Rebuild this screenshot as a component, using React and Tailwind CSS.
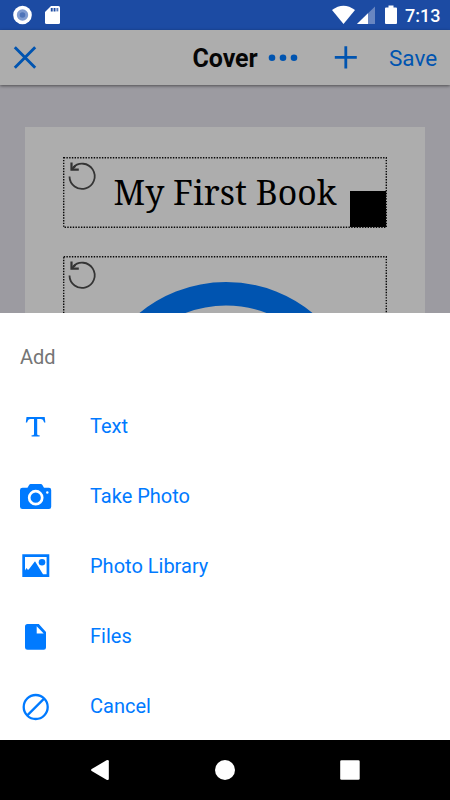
function StatusBar() {
  return (
    <header className="flex h-[30px] shrink-0 items-center bg-[#1c4ba3] text-white">
      <svg className="h-[30px] w-[70px]" viewBox="0 0 70 30">
        <circle cx="22.5" cy="15" r="9.3" fill="#fff" />
        <circle cx="22.5" cy="15" r="5.7" fill="#7f9bd0" />
        <circle cx="22.5" cy="15" r="2.8" fill="#4f74b9" />
        <path d="M51 6h7.5q1.5 0 1.5 1.5v15q0 1.5-1.5 1.5h-12q-1.5 0-1.5-1.5V12z" fill="#fff" />
        <path d="M50.8 8h1.9v3.4h-1.9zM53.6 8h1.9v3.4h-1.9z" fill="#1c4ba3" />
        <path d="M56.4 8h1.9v3.4h-1.9z" fill="#5679bb" />
      </svg>
      <svg className="ml-auto h-[30px] w-[75px]" viewBox="325 0 75 30">
        <path d="M332 10Q343.5 1.5 355 10L343.5 24z" fill="#fff" />
        <path d="M375 6.500V24H357z" fill="#6886c1" />
        <path d="M368 13.300V24H357z" fill="#fff" />
        <path d="M386 7.500h2.500V5.500h5v2H396q1 0 1 1V23q0 1-1 1h-10q-1 0-1-1V8.500q0-1 1-1z" fill="#fff" />
      </svg>
      <span className="w-[50px] pt-[2px] pl-[5px] text-[18px] leading-[30px] font-medium">7:13</span>
    </header>
  );
}

function Toolbar() {
  return (
    <nav className="relative z-10 flex h-[55px] shrink-0 items-center bg-[#adadad] text-[#0054b0] shadow-[0_1px_3px_rgba(0,0,0,0.5)]">
      <svg className="h-[55px] w-[192px]" viewBox="0 30 192 55" fill="none" stroke="currentColor" strokeWidth="2.900">
        <path d="M14.800 47.300l20.400 20.400M35.200 47.300l-20.400 20.400" />
      </svg>
      <h1 className="w-[76px] pt-[3px] pl-[0.600px] text-[25px] leading-[52px] font-bold tracking-[-0.1px] text-[#060606]">Cover</h1>
      <svg className="h-[55px] w-[121px]" viewBox="268 30 121 55" fill="currentColor">
        <circle cx="272" cy="57.700" r="3.300" />
        <circle cx="283" cy="57.700" r="3.300" />
        <circle cx="294" cy="57.700" r="3.300" />
        <path d="M334.800 56h9.600v-9.700h2.800V56h9.600v2.800h-9.600v9.700h-2.800v-9.700h-9.600z" />
      </svg>
      <span className="pt-[3px] text-[22.500px]">Save</span>
    </nav>
  );
}

function DottedFrame({ height, children }) {
  return (
    <div className="relative w-[324px] shrink-0" style={{ height }}>
      {children}
      <svg className="absolute inset-0 h-full w-full" fill="none">
        <rect x="0.700" y="0.700" width="322.600" height={height - 1.4} stroke="#080808" strokeWidth="1.400" strokeDasharray="1.4 1.330" />
      </svg>
      <svg className="absolute top-[4px] left-[4px] h-[32px] w-[32px]" viewBox="67 161 32 32" fill="none" stroke="#343434" strokeWidth="1.800">
        <path d="M69.500 176.500a12.600 12.600 0 1 0 3.300-8.700" />
        <path d="M71.500 162.500v7.200h7.300" strokeWidth="2.200" />
        <path d="M71.500 169.700l4-3.700" />
      </svg>
    </div>
  );
}

function BookPage() {
  return (
    <main className="flex h-[228px] shrink-0 flex-col items-center overflow-hidden bg-[#9c9ba1] pt-[42px]">
      <section className="flex h-[400px] w-[400px] shrink-0 flex-col items-center gap-[28px] bg-[#adadad] pt-[30px]">
        <DottedFrame height={71}>
          <div className="flex h-full items-end justify-end pr-px pb-px">
            <span className="w-[287px] self-center pl-[50.500px] font-['Noto_Serif',serif] text-[33.800px] leading-[70px] whitespace-nowrap text-black">My First Book</span>
            <span className="h-[36px] w-[36px] shrink-0 bg-black" />
          </div>
        </DottedFrame>
        <DottedFrame height={324}>
          <svg className="h-full w-full" viewBox="63 256 324 324" fill="none">
            <circle cx="226" cy="418" r="124.300" stroke="#0054b0" strokeWidth="23.500" />
          </svg>
        </DottedFrame>
      </section>
    </main>
  );
}

const actions = [
  {
    label: "Text",
    icon: <path d="M26.500 417h18.200l.7 5.500h-1.300q-.9-3.400-3.500-3.400h-3.400v14.800q0 1.200 1.200 1.300l1.200.1v1.200h-8v-1.200l1.200-.1q1.200-.1 1.200-1.300v-14.800h-3.400q-2.600 0-3.500 3.400h-1.300z" />,
  },
  {
    label: "Take Photo",
    icon: (
      <>
        <path d="M22.500 487.700h5l1.600-2.800q.6-.9 1.500-.9h10.300q.9 0 1.500.9l1.600 2.800h5q2.200 0 2.200 2.200v16.800q0 2.300-2.200 2.300H22.500q-2.500 0-2.500-2.300v-16.800q0-2.200 2.500-2.200z" />
        <circle cx="35.700" cy="497.700" r="6.500" fill="none" stroke="#fff" strokeWidth="2.700" />
        <circle cx="47.300" cy="492.500" r="1.200" fill="#fff" />
      </>
    ),
  },
  {
    label: "Photo Library",
    icon: (
      <>
        <path fillRule="evenodd" d="M22.300 554.300h27v22.800h-27zM25 557v13.500l1.500-2.500 1.500 2 1.500-1.500 5.500-7.200 8 12.900h3.600V557z" />
        <circle cx="42" cy="562.300" r="3.300" />
      </>
    ),
  },
  {
    label: "Files",
    icon: <path fillRule="evenodd" d="M27.500 624h11.300l7.200 8v15.500q0 2.300-2.300 2.300H27.500q-2.500 0-2.500-2.300v-21q0-2.500 2.500-2.500zM36.700 626.200v7.200h7z" />,
  },
  {
    label: "Cancel",
    icon: (
      <g fill="none" stroke="currentColor" strokeWidth="2.300">
        <circle cx="35.700" cy="707" r="12" />
        <path d="M27.300 715.400l16.800-16.800" />
      </g>
    ),
  },
];

function ActionSheet() {
  return (
    <section className="flex h-[427px] shrink-0 flex-col bg-white">
      <h2 className="h-[78px] pt-[9px] pl-[20px] text-[20px] leading-[70px] text-[#757575]">Add</h2>
      <ul className="text-[#007aff]">
        {actions.map(({ label, icon }, i) => (
          <li key={label} className="flex h-[70px] items-center">
            <svg className="h-[70px] w-[90px]" viewBox={`0 ${391 + i * 70} 90 70`} fill="currentColor">
              {icon}
            </svg>
            <span className="text-[20px]">{label}</span>
          </li>
        ))}
      </ul>
    </section>
  );
}

function NavigationBar() {
  return (
    <footer className="h-[60px] shrink-0 bg-black">
      <svg className="h-[60px] w-full" viewBox="0 740 450 60" fill="#fff">
        <path d="M91.700 769L106.500 760.300q2.300-1 2.300 1v17.400q0 2-2.300 1L91.700 771q-1.300-1 0-2z" />
        <circle cx="225" cy="770" r="10" />
        <rect x="340.200" y="760.200" width="19.500" height="19.500" rx="1.300" />
      </svg>
    </footer>
  );
}

export default function App() {
  return (
    <div className="flex h-[800px] w-[450px] flex-col overflow-hidden bg-black font-['Roboto',sans-serif]">
      <StatusBar />
      <Toolbar />
      <BookPage />
      <ActionSheet />
      <NavigationBar />
    </div>
  );
}
